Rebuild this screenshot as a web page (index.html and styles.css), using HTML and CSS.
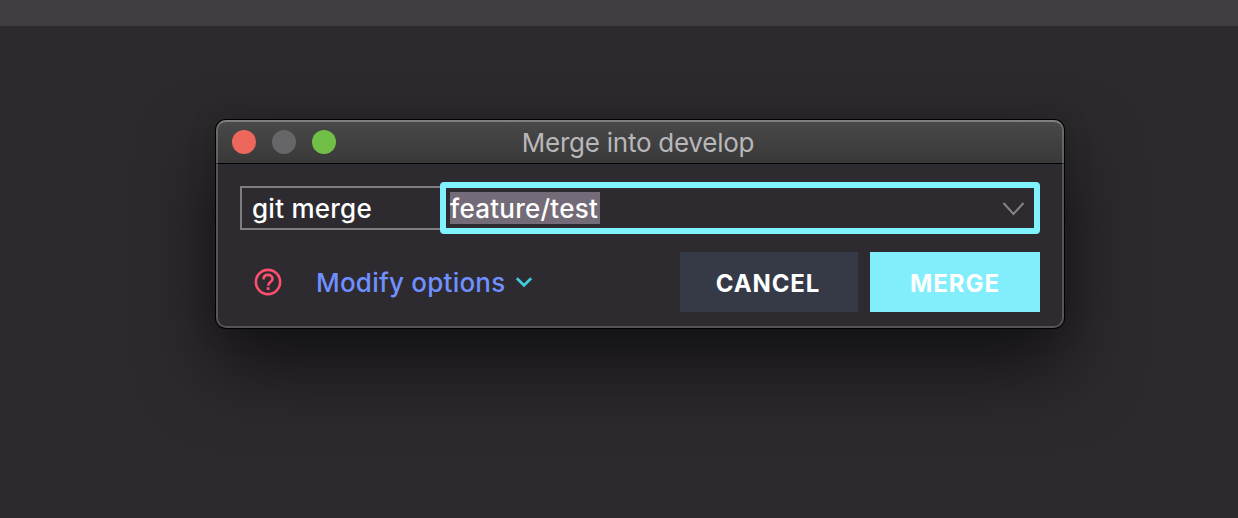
FILE: index.html
```html
<!DOCTYPE html>
<html lang="en">
<head>
<meta charset="utf-8">
<title>Merge into develop</title>
<link rel="stylesheet" href="styles.css">
</head>
<body>
<div class="toolbar"></div>
<main class="stage">
  <section class="dialog">
    <header class="titlebar">
      <div class="lights">
        <span class="light close"></span>
        <span class="light minimize"></span>
        <span class="light expand"></span>
      </div>
      <h1 class="title">Merge into develop</h1>
    </header>
    <div class="content">
      <div class="command">
        <div class="prefix"><span class="prefix-text">git merge</span></div>
        <div class="combo">
          <span class="selection">feature/test</span>
          <svg class="combo-arrow" width="24" height="16" viewBox="0 0 24 16"><path d="M2.5 3 12.5 14 22.5 3" fill="none" stroke="#858387" stroke-width="2"/></svg>
        </div>
      </div>
      <div class="actions">
        <svg class="help" width="28" height="28" viewBox="0 0 28 28" fill="none" stroke="#ff4f6f" stroke-width="2.6">
          <circle cx="14" cy="14" r="12.1"/>
          <path d="M9.6 11.4C9.6 8.5 11.4 6.9 14 6.9S18.5 8.5 18.5 10.9C18.5 14 14.1 14.2 14.1 17.8"/>
          <path d="M12.7 20.6h2.8" stroke-width="2.8"/>
        </svg>
        <a class="modify">Modify options</a>
        <svg class="modify-arrow" width="18" height="12" viewBox="0 0 18 12"><path d="M1.8 2.3 9 9.3 16.2 2.3" fill="none" stroke="#43cbdc" stroke-width="2.7"/></svg>
        <div class="buttons">
          <button class="btn cancel">CANCEL</button>
          <button class="btn merge">MERGE</button>
        </div>
      </div>
    </div>
  </section>
</main>
</body>
</html>
```
FILE: styles.css
```css
* { box-sizing: border-box; }
body {
  margin: 0;
  height: 518px;
  overflow: hidden;
  background: #2d2a2e;
  font-family: Inter, "Liberation Sans", sans-serif;
  font-size: 26px;
  color: #fff;
}
.toolbar { height: 26px; background: #403e43; }
.stage { padding: 94px 0 0 216px; }
.dialog {
  position: relative;
  width: 848px;
  height: 208px;
  border-radius: 10px;
  background: #2d2a30;
  box-shadow: 0 0 0 1px #000, 0 38px 76px rgba(0, 0, 0, .6), 0 0 30px rgba(0, 0, 0, .15);
}
/* light rim drawn above the titlebar */
.dialog::after {
  content: "";
  position: absolute;
  inset: 0;
  border: 2px solid rgba(255, 255, 255, .2);
  border-top-color: rgba(255, 255, 255, .3);
  border-radius: 10px;
  pointer-events: none;
}
.titlebar {
  display: grid;
  grid-template-columns: 120px 1fr 140px;
  align-items: center;
  height: 44px;
  padding: 0 0 0 16px;
  border-bottom: 1px solid #000;
  border-radius: 10px 10px 0 0;
  background: linear-gradient(#49494a, #39393a);
}
.lights { display: flex; gap: 16px; }
.light { width: 24px; height: 24px; border-radius: 50%; }
.close { background: #ee675c; }
.minimize { background: #666567; }
.expand { background: #71bf47; }
.title {
  margin: 0;
  padding-top: 2px;
  font-size: 26px;
  font-weight: 400;
  line-height: 32px;
  letter-spacing: -.25px;
  text-align: center;
  color: #b8b7b9;
  white-space: nowrap;
}
.content { padding: 18px 24px 0; }
.command { display: flex; align-items: center; height: 52px; }
.prefix {
  display: flex;
  align-items: center;
  width: 200px;
  height: 44px;
  padding: 2px 0 0 10px;
  border: 2px solid #807d80;
  border-right: 0;
}
.combo {
  display: flex;
  align-items: center;
  justify-content: space-between;
  width: 600px;
  height: 52px;
  padding: 0 9px 0 4px;
  border: 6px solid #80f1ff;
  border-radius: 4px;
}
.prefix-text, .selection { font-weight: 500; line-height: 32px; letter-spacing: .24px; white-space: nowrap; }
.selection { width: 150px; height: 32px; padding-top: 1px; background: #736b77; }
.actions { display: flex; align-items: center; height: 60px; margin-top: 18px; padding-left: 14px; }
.help { flex: none; }
.modify { margin-left: 34px; width: 190px; font-weight: 500; letter-spacing: .22px; color: #7090ff; white-space: nowrap; }
.modify-arrow { margin-left: 9px; }
.buttons { display: flex; gap: 12px; margin-left: auto; }
.btn {
  height: 60px;
  padding: 3px 0 0;
  border: 0;
  font: 700 24px Inter, "Liberation Sans", sans-serif;
  letter-spacing: .9px;
  color: #fff;
}
.cancel { width: 178px; padding-right: 2px; background: #353a46; }
.merge { width: 170px; background: #82eefb; }
```
